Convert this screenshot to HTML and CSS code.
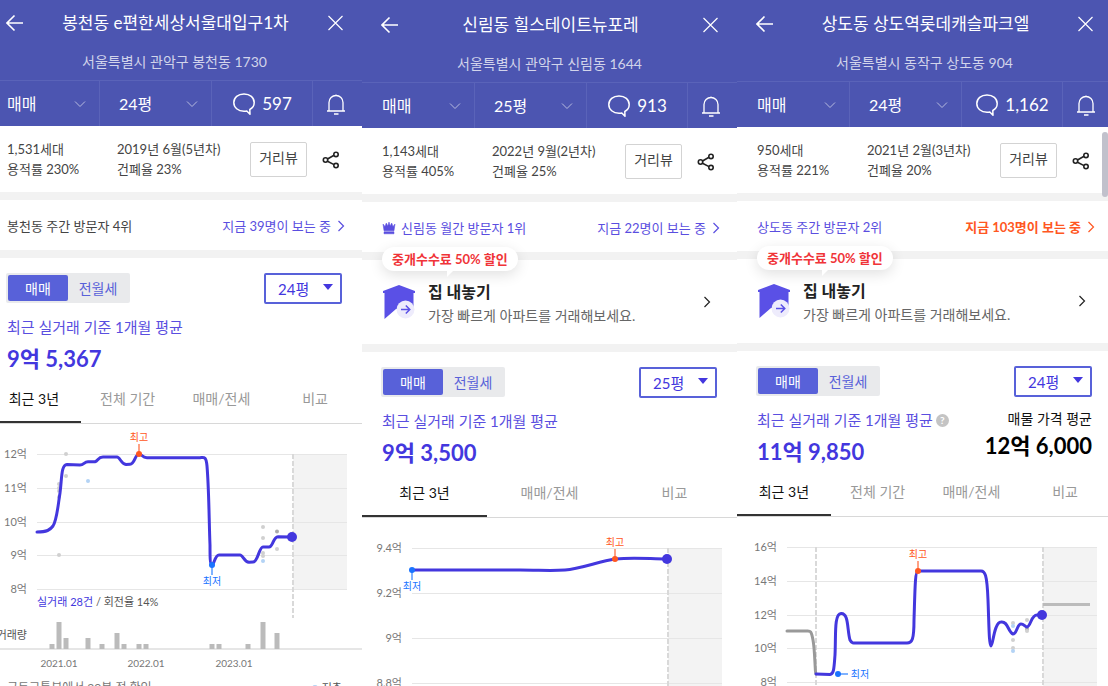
FILE: index.html
```html
<!DOCTYPE html>
<html lang="ko">
<head>
<meta charset="utf-8">
<meta name="viewport" content="width=device-width, initial-scale=1">
<title>아파트 실거래가 비교</title>
<link rel="stylesheet" href="styles.css">
</head>
<body>
<svg class="sprite" aria-hidden="true">
  <symbol id="i-back" viewBox="0 0 18 18"><path d="M8.500 1.500 1 9 8.500 16.500M1 9H17" fill="none" stroke="currentColor" stroke-width="1.600"/></symbol>
  <symbol id="i-close" viewBox="0 0 16 16"><path d="M1.500 1 15.500 15M15.500 1 1.500 15" fill="none" stroke="currentColor" stroke-width="1.200"/></symbol>
  <symbol id="i-down" viewBox="0 0 12 8"><path d="M1 1.500 6 6.500 11 1.500" fill="none" stroke="currentColor" stroke-width="1"/></symbol>
  <symbol id="i-right" viewBox="0 0 8 12"><path d="M1.500 1 6.500 6 1.500 11" fill="none" stroke="currentColor" stroke-width="1.200"/></symbol>
  <symbol id="i-talk" viewBox="0 0 24 24"><path d="M12 2C6 2 1.800 5.600 1.800 10.600S6 19.200 12 19.200c1 0 2-.1 2.800-.3l3.200 3.300-.2-4.700c2.900-1.400 4.400-3.800 4.400-6.900C22.200 5.600 18 2 12 2z" fill="none" stroke="currentColor" stroke-width="1.500" stroke-linejoin="round"/></symbol>
  <symbol id="i-bell" viewBox="0 0 20 22"><path d="M1 18H19M3 18V9.500a7 7 0 0 1 14 0V18M10 1.500v1.500M8 21h4.500" fill="none" stroke="currentColor" stroke-width="1.300"/></symbol>
  <symbol id="i-share" viewBox="0 0 18 18"><path d="M5.500 8 12 4.300M5.500 10.200 12 13.600" stroke="currentColor" stroke-width="1.600"/><g fill="none" stroke="currentColor" stroke-width="1.600"><circle cx="3.500" cy="9" r="2.200"/><circle cx="14" cy="3.400" r="2.200"/><circle cx="14" cy="14.600" r="2.200"/></g></symbol>
  <symbol id="i-house" viewBox="0 0 34 36"><path d="M17 1 33 7v2h-1.500v16H14L2.500 35V9H1V7z" fill="#5a50e6"/><circle cx="23.500" cy="25.500" r="9" fill="#eeecfc"/><path d="M19 25.500h8.500M23.800 21.500l4 4-4 4" fill="none" stroke="#5a50e6" stroke-width="1.500"/></symbol>
  <symbol id="i-crown" viewBox="0 0 14 14"><path d="M1 3 3 5.500 4.300 2 5.800 5 7 1l1.200 4L9.700 2 11 5.500 13 3 12 9.800H2zM2 10.800h10v2H2z" fill="currentColor" stroke="currentColor" stroke-width=".5"/></symbol>
</svg>

<main class="board">
  <section class="panel panel-first">
    <div class="body">
      <header class="head">
        <div class="title-row">
          <button class="icon-btn" aria-label="뒤로"><svg class="ic-18"><use href="#i-back"/></svg></button>
          <h1 class="title">봉천동 e편한세상서울대입구1차</h1>
          <button class="icon-btn" aria-label="닫기"><svg class="ic-16"><use href="#i-close"/></svg></button>
        </div>
        <p class="address">서울특별시 관악구 봉천동 1730</p>
        <nav class="filters">
          <button class="filter">매매<svg class="ic-down"><use href="#i-down"/></svg></button>
          <button class="filter">24평<svg class="ic-down"><use href="#i-down"/></svg></button>
          <button class="talk"><svg class="ic-24"><use href="#i-talk"/></svg>597</button>
          <button class="bell" aria-label="알림"><svg class="ic-bell"><use href="#i-bell"/></svg></button>
        </nav>
      </header>
      <div class="info">
        <p class="info-a">1,531세대<br>용적률 230%</p>
        <p class="info-b">2019년 6월(5년차)<br>건폐율 23%</p>
        <button class="view-btn">거리뷰</button>
        <button class="icon-btn share" aria-label="공유"><svg class="ic-18"><use href="#i-share"/></svg></button>
      </div>
      <div class="visitors">
        <span>봉천동 주간 방문자 4위</span>
        <a class="live" href="#">지금 39명이 보는 중<svg class="ic-right"><use href="#i-right"/></svg></a>
      </div>
      <div class="price">
        <div class="controls">
          <div class="segment"><button class="on">매매</button><button>전월세</button></div>
          <label class="size"><select aria-label="평형"><option>24평</option></select></label>
        </div>
        <div class="figures">
          <div><p class="caption">최근 실거래 기준 1개월 평균</p><p class="amount">9억 5,367</p></div>
        </div>
      </div>
      <nav class="tabs"><button class="on">최근 3년</button><button>전체 기간</button><button>매매/전세</button><button>비교</button></nav>
      <svg class="chart" viewBox="-13 424 375 250" role="img" aria-label="최근 3년 실거래가">
        <rect class="future" x="293" y="454" width="54" height="136"/>
        <path class="grid" d="M37 454.500H347M37 488.500H347M37 522.500H347M37 555.500H347M37 589.500H347"/>
        <g class="ylabel"><text x="27" y="458">12억</text><text x="27" y="492">11억</text><text x="27" y="526">10억</text><text x="27" y="559">9억</text><text x="27" y="593">8억</text></g>
        <path class="dash" d="M293 454V618"/>
        <g class="dots"><circle cx="66" cy="454" r="2"/><circle cx="66" cy="476" r="2"/><circle cx="59" cy="484" r="2"/><circle cx="59" cy="488" r="2"/><circle cx="59" cy="491" r="2"/><circle cx="59" cy="497" r="2"/><circle cx="59" cy="555" r="2"/><circle cx="263" cy="527" r="2"/><circle cx="263" cy="538" r="2"/><circle cx="263" cy="553" r="2"/><circle cx="263" cy="556" r="2"/><circle class="strong" cx="277" cy="531.500" r="2"/><circle cx="277" cy="549" r="2"/><circle class="low" cx="88" cy="481" r="2"/><circle class="low" cx="263" cy="561" r="2"/></g>
        <path class="line" d="M37 532C47 532 50 530 53 526C57 520 58 505 60 493C62 478 61 465 67 464.500L80 465C84 465 84 462 88 461.800H95C98 461 98 457 103 457H117C120 457 121 464 126 464.500L130 464.300C135 464 135 454 139 454C142 454 142 457.700 147 457.700H200C204 457.500 206 456 207 466C209 490 209 520 210 545C210 556 210 565 212 565C214 565 215 555 219 555H240C243 555 244 562 249 562.300L253 562C258 562 259 547 263 547H269C273 547 273 537 278 536.700L292 537"/>
        <g class="high"><path d="M139 444V454"/><circle cx="139" cy="454" r="3"/><text x="139" y="441">최고</text></g>
        <g class="lowest"><path d="M212 565V575"/><circle cx="212" cy="565" r="3"/><text x="212" y="585">최저</text></g>
        <circle class="now" cx="292" cy="537" r="5"/>
        <text class="summary" x="37" y="606"><tspan class="deal">실거래 28건</tspan> / 회전율 14%</text>
        <text class="volume" x="27" y="639">거래량</text>
        <path class="base" d="M-13 649H362"/>
        <path class="bars" d="M52 649V644M59 649V622M66 649V638M88 649V638M102 649V644M117 649V633M124 649V644M139 649V644M146 649V644M212 649V644M219 649V644M248 649V644M263 649V622M277 649V633"/>
        <g class="xlabel"><text x="59" y="667">2021.01</text><text x="146" y="667">2022.01</text><text x="234" y="667">2023.01</text></g>
      </svg>
      <div class="source"><span>국토교통부에서 20분 전 확인</span><span class="legend">저층</span></div>
    </div>
  </section>

  <section class="panel panel-middle">
    <div class="body">
      <header class="head">
        <div class="title-row">
          <button class="icon-btn" aria-label="뒤로"><svg class="ic-18"><use href="#i-back"/></svg></button>
          <h1 class="title">신림동 힐스테이트뉴포레</h1>
          <button class="icon-btn" aria-label="닫기"><svg class="ic-16"><use href="#i-close"/></svg></button>
        </div>
        <p class="address">서울특별시 관악구 신림동 1644</p>
        <nav class="filters">
          <button class="filter">매매<svg class="ic-down"><use href="#i-down"/></svg></button>
          <button class="filter">25평<svg class="ic-down"><use href="#i-down"/></svg></button>
          <button class="talk"><svg class="ic-24"><use href="#i-talk"/></svg>913</button>
          <button class="bell" aria-label="알림"><svg class="ic-bell"><use href="#i-bell"/></svg></button>
        </nav>
      </header>
      <div class="info">
        <p class="info-a">1,143세대<br>용적률 405%</p>
        <p class="info-b">2022년 9월(2년차)<br>건폐율 25%</p>
        <button class="view-btn">거리뷰</button>
        <button class="icon-btn share" aria-label="공유"><svg class="ic-18"><use href="#i-share"/></svg></button>
      </div>
      <div class="visitors">
        <span class="ranked"><svg class="ic-crown"><use href="#i-crown"/></svg>신림동 월간 방문자 1위</span>
        <a class="live" href="#">지금 22명이 보는 중<svg class="ic-right"><use href="#i-right"/></svg></a>
      </div>
      <a class="sell" href="#">
        <span class="promo">중개수수료 50% 할인</span>
        <svg class="ic-house"><use href="#i-house"/></svg>
        <span class="sell-text"><strong>집 내놓기</strong><span>가장 빠르게 아파트를 거래해보세요.</span></span>
        <svg class="ic-right sell-go"><use href="#i-right"/></svg>
      </a>
      <div class="price">
        <div class="controls">
          <div class="segment"><button class="on">매매</button><button>전월세</button></div>
          <label class="size"><select aria-label="평형"><option>25평</option></select></label>
        </div>
        <div class="figures">
          <div><p class="caption">최근 실거래 기준 1개월 평균</p><p class="amount">9억 3,500</p></div>
        </div>
      </div>
      <nav class="tabs"><button class="on">최근 3년</button><button>매매/전세</button><button>비교</button></nav>
      <svg class="chart" viewBox="362 518 375 250" role="img" aria-label="최근 3년 실거래가">
        <rect class="future" x="668" y="548" width="54" height="220"/>
        <path class="grid" d="M412 548.500H722M412 593.500H722M412 638.500H722M412 683.500H722"/>
        <g class="ylabel"><text x="402" y="552">9.4억</text><text x="402" y="597">9.2억</text><text x="402" y="642">9억</text><text x="402" y="687">8.8억</text></g>
        <path class="dash" d="M668 548V768"/>
        <path class="line" d="M412 570H520C540 570 550 571 565 570C580 569 600 561 615 559C635 557 650 559 667 559"/>
        <g class="high"><path d="M615 549V559"/><circle cx="615" cy="559" r="3"/><text x="615" y="546">최고</text></g>
        <g class="lowest"><path d="M412 570V580"/><circle cx="412" cy="570" r="3"/><text x="412" y="590">최저</text></g>
        <circle class="now" cx="667" cy="559" r="5"/>
      </svg>
    </div>
  </section>

  <section class="panel panel-last">
    <div class="body">
      <header class="head">
        <div class="title-row">
          <button class="icon-btn" aria-label="뒤로"><svg class="ic-18"><use href="#i-back"/></svg></button>
          <h1 class="title">상도동 상도역롯데캐슬파크엘</h1>
          <button class="icon-btn" aria-label="닫기"><svg class="ic-16"><use href="#i-close"/></svg></button>
        </div>
        <p class="address">서울특별시 동작구 상도동 904</p>
        <nav class="filters">
          <button class="filter">매매<svg class="ic-down"><use href="#i-down"/></svg></button>
          <button class="filter">24평<svg class="ic-down"><use href="#i-down"/></svg></button>
          <button class="talk"><svg class="ic-24"><use href="#i-talk"/></svg>1,162</button>
          <button class="bell" aria-label="알림"><svg class="ic-bell"><use href="#i-bell"/></svg></button>
        </nav>
      </header>
      <div class="info">
        <p class="info-a">950세대<br>용적률 221%</p>
        <p class="info-b">2021년 2월(3년차)<br>건폐율 20%</p>
        <button class="view-btn">거리뷰</button>
        <button class="icon-btn share" aria-label="공유"><svg class="ic-18"><use href="#i-share"/></svg></button>
      </div>
      <div class="visitors">
        <span class="ranked">상도동 주간 방문자 2위</span>
        <a class="live hot" href="#">지금 103명이 보는 중<svg class="ic-right"><use href="#i-right"/></svg></a>
      </div>
      <a class="sell" href="#">
        <span class="promo">중개수수료 50% 할인</span>
        <svg class="ic-house"><use href="#i-house"/></svg>
        <span class="sell-text"><strong>집 내놓기</strong><span>가장 빠르게 아파트를 거래해보세요.</span></span>
        <svg class="ic-right sell-go"><use href="#i-right"/></svg>
      </a>
      <div class="price">
        <div class="controls">
          <div class="segment"><button class="on">매매</button><button>전월세</button></div>
          <label class="size"><select aria-label="평형"><option>24평</option></select></label>
        </div>
        <div class="figures">
          <div><p class="caption">최근 실거래 기준 1개월 평균<button class="help" aria-label="도움말">?</button></p><p class="amount">11억 9,850</p></div>
          <div class="asking"><p class="caption">매물 가격 평균</p><p class="amount">12억 6,000</p></div>
        </div>
      </div>
      <nav class="tabs"><button class="on">최근 3년</button><button>전체 기간</button><button>매매/전세</button><button>비교</button></nav>
      <svg class="chart" viewBox="737 517 375 250" role="img" aria-label="최근 3년 실거래가">
        <rect class="future" x="1043" y="547" width="54" height="220"/>
        <path class="grid" d="M787 547.500H1097M787 581.500H1097M787 615.500H1097M787 648.500H1097M787 682.500H1097"/>
        <g class="ylabel"><text x="777" y="551">16억</text><text x="777" y="585">14억</text><text x="777" y="619">12억</text><text x="777" y="652">10억</text><text x="777" y="686">8억</text></g>
        <path class="dash" d="M816 547V767M1043 547V767"/>
        <g class="dots"><circle cx="1013" cy="623" r="2"/><circle class="low" cx="1013" cy="626" r="2"/><circle cx="1013" cy="640" r="2"/><circle cx="1013" cy="648" r="2"/><circle class="low" cx="1013" cy="651" r="2"/><circle cx="1027" cy="620" r="2"/><circle class="strong" cx="1027" cy="629" r="2"/><circle cx="1027" cy="631" r="2"/></g>
        <path class="past" d="M787 631H805C810 631 811 629 813 640C815 650 815 674 816 674"/>
        <path class="ask" d="M1043 604.500H1090"/>
        <path class="line" d="M816 674L830 674.500C834 674 834 668 835 655C836 635 834 614 841 613.500C849 613 847 630 850 640C852 644 854 643 860 643H907C912 643 914 640 914 620C915 590 915 571 918 571H980C985 570 987 574 988 600C989 625 989 645 991 646C993 646 994 622 1001 622C1008 621 1008 632 1013 634C1017 634 1017 624 1021 624C1024 624 1025 627 1027 627C1031 626 1031 615 1037 615H1042"/>
        <g class="high"><path d="M918 561V571"/><circle cx="918" cy="571" r="3"/><text x="918" y="558">최고</text></g>
        <g class="lowest"><path d="M838 674H848"/><circle cx="838" cy="674" r="3"/><text x="860" y="678">최저</text></g>
        <circle class="now" cx="1042" cy="615" r="5"/>
      </svg>
    </div>
    <div class="scroll-thumb"></div>
  </section>
</main>
</body>
</html>
```
FILE: styles.css
```css
* { box-sizing: border-box; margin: 0; padding: 0; }

body {
  font-family: Lato, "Noto Sans CJK KR", sans-serif;
  font-size: 13px;
  line-height: 20px;
  color: #444;
  background: #fff;
}

button, select { font: inherit; color: inherit; background: none; border: 0; cursor: pointer; }
a { color: inherit; text-decoration: none; }
svg { display: block; flex: none; }
.sprite { position: absolute; width: 0; height: 0; }

.board {
  display: grid;
  grid-template-columns: 362fr 375fr 371fr;
  height: 100vh;
  overflow: hidden;
}

/* The outer panels run past the edges of the window. */
.panel { position: relative; min-width: 0; overflow: hidden; }
.panel-first .body { margin-left: -13px; }
.panel-last .body { margin-right: -4px; }
.panel-middle .head { padding-top: 2px; }
.panel-last .head { padding-top: 1px; }

.ic-16 { width: 16px; height: 16px; }
.ic-18 { width: 18px; height: 18px; }
.ic-24 { width: 24px; height: 24px; }
.ic-down { width: 12px; height: 8px; opacity: .6; }
.ic-right { width: 8px; height: 12px; }
.ic-bell { width: 20px; height: 22px; }
.ic-house { width: 34px; height: 36px; }
.ic-crown { width: 14px; height: 14px; }

/* Header */
.head { background: #4c55b1; color: #fff; }
.title-row { display: flex; align-items: center; justify-content: space-between; height: 46px; padding: 0 19px; }
.title { font-size: 17px; font-weight: 400; line-height: 24px; }
.icon-btn { display: flex; }
.address { height: 34px; padding-top: 6px; font-size: 14px; text-align: center; color: rgba(255, 255, 255, .75); }
.filters { display: grid; grid-template-columns: 112fr 112fr 101fr 50fr; height: 46px; border-top: 1px solid #5a63b9; font-size: 16px; }
.filters button { display: flex; align-items: center; }
.filters button + button { border-left: 1px solid #5a63b9; }
.filter { justify-content: space-between; padding: 0 13px 0 20px; }
.filters .filter + .filter { padding-left: 19px; }
.talk { justify-content: center; gap: 6px; font-size: 17px; }
.bell { justify-content: center; padding-right: 3px; }

/* Complex facts */
.info { display: flex; align-items: center; height: 74px; padding: 0 20px; border-bottom: 8px solid #f2f2f2; }
.info-a { width: 110px; }
.info-b { flex: 1; }
.view-btn { width: 57px; height: 35px; padding-bottom: 2px; border: 1px solid #d3d3d3; border-radius: 2px; font-size: 14px; }
.share { margin: 2px 2px 0 15px; color: #222; }

.visitors { display: flex; align-items: center; justify-content: space-between; height: 58px; padding: 2px 17px 0 20px; border-bottom: 8px solid #f2f2f2; }
.ranked { display: flex; align-items: center; gap: 5px; color: #5a4ee0; }
.live { display: flex; align-items: center; gap: 6px; color: #5a4ee0; }
.live.hot { color: #ff5722; font-weight: 700; }

/* Sell banner */
.sell { position: relative; display: flex; align-items: center; gap: 12px; height: 92px; padding: 0 26px 0 20px; border-bottom: 8px solid #f2f2f2; }
.promo { position: absolute; left: 20px; top: -13px; padding: 2px 10px; border-radius: 12px; background: #fff; color: #f03438; font-weight: 700; box-shadow: 0 4px 14px rgba(0, 0, 0, .12); }
.promo::after { content: ""; position: absolute; left: 65px; top: 100%; border-top: 6px solid #fff; border-right: 6px solid transparent; }
.sell-text { flex: 1; display: flex; flex-direction: column; gap: 2px; padding-top: 4px; font-size: 14px; line-height: 22px; color: #666; }
.sell-text strong { font-size: 16px; color: #222; }
.sell-go { color: #222; }

/* Price summary */
.price { height: 118px; padding: 15px 20px 0 19px; }
.controls { display: flex; justify-content: space-between; align-items: flex-start; }
.segment { display: flex; padding: 2px; border-radius: 2px; background: #e9eaec; font-size: 14px; color: #5861d9; }
.segment button { width: 60px; height: 26px; padding-top: 2px; border-radius: 2px; }
.segment .on { background: #5861d9; color: #fff; }
.size { position: relative; display: flex; }
.size select { width: 78px; height: 31px; padding-left: 12px; border: 2px solid #5861d9; border-radius: 2px; appearance: none; font-size: 15px; color: #4337de; }
.size::after { content: ""; position: absolute; right: 9px; top: 11px; border-top: 6px solid #4337de; border-left: 5px solid transparent; border-right: 5px solid transparent; pointer-events: none; }
.figures { display: flex; justify-content: space-between; padding: 13px 0 0 1px; }
.caption { display: flex; align-items: center; gap: 3px; font-size: 15px; color: #5a4ee0; }
.amount { padding-top: 7px; font-size: 22px; font-weight: 700; line-height: 30px; color: #4337de; }
.asking { text-align: right; margin-top: -1px; }
.asking .caption { justify-content: flex-end; font-size: 14px; color: #111; }
.asking .amount { padding-top: 2px; color: #000; }
.help { width: 13px; height: 13px; border-radius: 50%; background: #c4c4c4; color: #fff; font-size: 10px; font-weight: 700; line-height: 13px; }

.tabs { display: flex; height: 48px; border-bottom: 1px solid #d8d8d8; font-size: 14px; color: #999; }
.tabs button { flex: 1; padding-bottom: 1px; }
.tabs .on { color: #111; border-bottom: 2px solid #333; padding-bottom: 0; }

/* Chart */
.chart { width: 100%; height: auto; }
.future { fill: #f3f3f3; }
.grid { stroke: #e6e6e6; }
.ylabel { fill: #777; font-size: 11px; text-anchor: end; }
.xlabel { fill: #777; font-size: 10px; text-anchor: middle; }
.dash { fill: none; stroke: #d9d9d9; stroke-width: 2; stroke-dasharray: 5 2; }
.line, .past { fill: none; stroke: #4337de; stroke-width: 3; stroke-linecap: round; stroke-linejoin: round; }
.past { stroke: #999; }
.ask { stroke: #bbb; stroke-width: 3; }
.dots { fill: #d0d0d0; }
.dots .strong { fill: #aaa; }
.dots .low { fill: #b3d3f5; }
.high, .lowest { font-size: 10px; text-anchor: middle; }
.high { fill: #ff5722; }
.high path { stroke: #ffa184; stroke-width: 2; }
.lowest { fill: #1a73ff; }
.lowest path { stroke: #7fb2ff; stroke-width: 2; }
.now { fill: #4337de; }
.summary, .volume { fill: #555; font-size: 11px; }
.summary .deal { fill: #4337de; }
.volume { text-anchor: end; }
.base { stroke: #e6e6e6; stroke-width: 2; }
.bars { stroke: #bbb; stroke-width: 5; }
.source { display: flex; justify-content: space-between; padding: 4px 20px 0; font-size: 12px; color: #777; }
.legend { display: flex; align-items: center; gap: 4px; font-size: 11px; color: #555; }
.legend::before { content: ""; width: 6px; height: 6px; border-radius: 50%; background: #b3d3f5; }

.scroll-thumb { position: absolute; right: 0; top: 132px; width: 6px; height: 65px; border-radius: 3px; background: #c1c1cc; }
```
